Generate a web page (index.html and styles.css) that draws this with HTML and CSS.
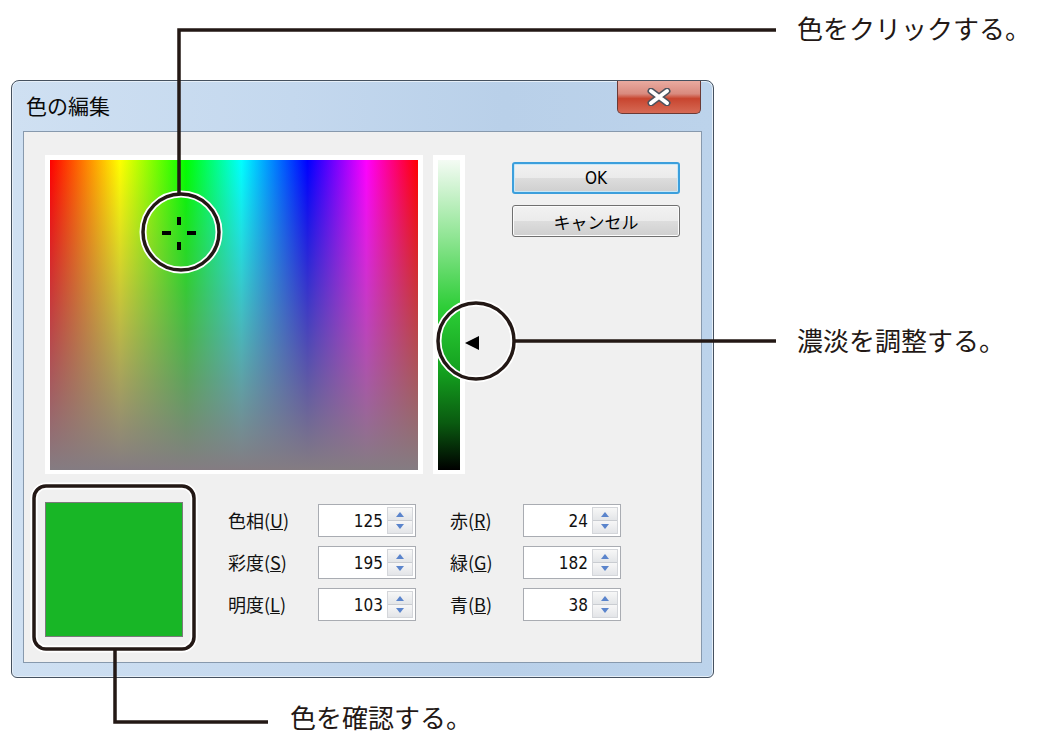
FILE: index.html
```html
<!DOCTYPE html>
<html lang="ja">
  <head>
    <meta charset="UTF-8">
    <title>色の編集</title>
    <link rel="stylesheet" href="styles.css">
  </head>
  <body>
    <div id="page">
      <div id="dialog">
        <div class="titlebar">
          <span class="title">色の編集</span>
          <div class="close-btn">
            <svg width="26" height="18" viewBox="0 0 26 18">
              <path d="M5 3 L21 15 M21 3 L5 15" stroke="#4d535e" stroke-width="7" stroke-linecap="round"/>
              <path d="M5 3 L21 15 M21 3 L5 15" stroke="#fff" stroke-width="4" stroke-linecap="round"/>
            </svg>
          </div>
        </div>

        <div class="client">
          <div class="top-row">
            <div class="spectrum-box">
              <div class="spectrum">
                <div class="cross" style="left: 129px; top: 73px;">
                  <span class="c-top"></span>
                  <span class="c-bottom"></span>
                  <span class="c-left"></span>
                  <span class="c-right"></span>
                </div>
              </div>
            </div>
            <div class="lum-box">
              <div class="lum"></div>
              <span class="lum-arrow" style="top: 181px;"></span>
            </div>
            <div class="buttons">
              <button class="btn btn-ok">OK</button>
              <button class="btn">キャンセル</button>
            </div>
          </div>

          <div class="bottom-row">
            <div class="swatch"></div>
            <div class="fields">
              <label class="lbl">色相(<u>U</u>)</label>
              <div class="spin-field"><span class="val">125</span><span class="spin"><i class="up"></i><i class="down"></i></span></div>
              <label class="lbl lbl-right">赤(<u>R</u>)</label>
              <div class="spin-field"><span class="val">24</span><span class="spin"><i class="up"></i><i class="down"></i></span></div>

              <label class="lbl">彩度(<u>S</u>)</label>
              <div class="spin-field"><span class="val">195</span><span class="spin"><i class="up"></i><i class="down"></i></span></div>
              <label class="lbl lbl-right">緑(<u>G</u>)</label>
              <div class="spin-field"><span class="val">182</span><span class="spin"><i class="up"></i><i class="down"></i></span></div>

              <label class="lbl">明度(<u>L</u>)</label>
              <div class="spin-field"><span class="val">103</span><span class="spin"><i class="up"></i><i class="down"></i></span></div>
              <label class="lbl lbl-right">青(<u>B</u>)</label>
              <div class="spin-field"><span class="val">38</span><span class="spin"><i class="up"></i><i class="down"></i></span></div>
            </div>
          </div>
        </div>
      </div>

      <!-- 説明の線と丸 -->
      <svg class="callouts" width="1037" height="733" viewBox="0 0 1037 733">
        <g fill="none" stroke="#fff" stroke-width="7">
          <circle cx="181" cy="232" r="38"/>
          <circle cx="476" cy="341" r="38"/>
          <rect x="34" y="486" width="160" height="163" rx="12"/>
        </g>
        <g fill="none" stroke="#231815" stroke-width="3.5">
          <polyline points="179,193 179,30 776,30"/>
          <circle cx="181" cy="232" r="38"/>
          <line x1="514" y1="341" x2="776" y2="341"/>
          <circle cx="476" cy="341" r="38"/>
          <polyline points="115,649 115,722 268,722"/>
          <rect x="34" y="486" width="160" height="163" rx="12"/>
        </g>
      </svg>
      <p class="note note-click">色をクリックする。</p>
      <p class="note note-lum">濃淡を調整する。</p>
      <p class="note note-check">色を確認する。</p>
    </div>
  </body>
</html>
```

FILE: styles.css
```css
body {
  margin: 0;
  background-color: #fff;
  font-family: "Noto Sans CJK JP", sans-serif;
  color: #000;
}

#page {
  position: relative;
  width: 1037px;
  height: 733px;
  padding: 80px 0 0 11px;
  box-sizing: border-box;
}

#dialog {
  width: 703px;
  height: 598px;
  box-sizing: border-box;
  border: 1px solid #45515f;
  border-radius: 8px 8px 6px 6px;
  padding: 0 11px 14px 11px;
  display: flex;
  flex-direction: column;
  background: linear-gradient(to right, #cfe0f2 0%, #c4d8ee 40%, #b9d0e9 70%, #bcd3eb 100%);
  box-shadow: inset 0 0 0 1px #e6eff8;
}

.titlebar {
  height: 50px;
  display: flex;
  justify-content: space-between;
  align-items: flex-start;
}

.title {
  margin: 11px 0 0 3px;
  font-size: 21px;
  line-height: 26px;
  color: #0a0a0a;
}

.close-btn {
  width: 84px;
  height: 33px;
  margin-right: 1px;
  box-sizing: border-box;
  border: 1px solid #6b3a35;
  border-top: none;
  border-radius: 0 0 5px 5px;
  background: linear-gradient(to bottom, #e9aaa0 0%, #d98a7e 40%, #c8452f 55%, #d66a55 100%);
  display: flex;
  align-items: center;
  justify-content: center;
}

.client {
  flex: 1;
  box-sizing: border-box;
  border: 1px solid #8799ad;
  background-color: #f0f0f0;
  padding: 23px 0 0 21px;
}

.top-row {
  display: flex;
}

.spectrum-box {
  width: 378px;
  height: 319px;
  box-sizing: border-box;
  padding: 5px 5px 4px 5px;
  background-color: #fff;
}

.spectrum {
  position: relative;
  width: 100%;
  height: 100%;
  background:
    linear-gradient(to bottom, rgba(128, 128, 128, 0) 0%, rgba(132, 124, 130, 1) 100%),
    linear-gradient(to right, #f00 0%, #ff0 19%, #0f0 37%, #0ff 52%, #00f 70%, #f0f 86%, #f00 100%);
}

.cross {
  position: absolute;
  width: 0;
  height: 0;
}

.cross span {
  position: absolute;
  background-color: #000;
}

.c-top { left: -2px; top: -16px; width: 4px; height: 8px; }
.c-bottom { left: -2px; top: 9px; width: 4px; height: 8px; }
.c-left { left: -17px; top: -2px; width: 9px; height: 4px; }
.c-right { left: 8px; top: -2px; width: 9px; height: 4px; }

.lum-box {
  position: relative;
  width: 32px;
  height: 319px;
  margin-left: 10px;
  box-sizing: border-box;
  padding: 5px 5px 4px 5px;
  background-color: #fff;
}

.lum {
  width: 100%;
  height: 100%;
  background: linear-gradient(to bottom, #f4fbf4 0%, #8fe593 25%, #2ccd36 48%, #14a11f 68%, #0a5a10 85%, #000 100%);
}

.lum-arrow {
  position: absolute;
  left: 32px;
  width: 0;
  height: 0;
  border-top: 7px solid transparent;
  border-bottom: 7px solid transparent;
  border-right: 14px solid #000;
}

.buttons {
  display: flex;
  flex-direction: column;
  gap: 11px;
  margin-left: 47px;
  padding-top: 7px;
}

.btn {
  width: 168px;
  height: 32px;
  border: 1px solid #707070;
  border-radius: 3px;
  background: linear-gradient(to bottom, #f2f2f2 0%, #ebebeb 49%, #dddddd 50%, #cfcfcf 100%);
  box-shadow: inset 0 0 0 1px #fcfcfc;
  font-family: "DejaVu Sans Condensed", "Noto Sans CJK JP", sans-serif;
  font-size: 17px;
  color: #000;
  padding: 0;
}

.btn-ok {
  border: 2px solid #3c9fdc;
  box-shadow: inset 0 0 0 1px #c8e8f8;
}

.bottom-row {
  display: flex;
  margin-top: 28px;
}

.swatch {
  width: 138px;
  height: 135px;
  box-sizing: border-box;
  border: 1px solid #7a7a7a;
  background-color: #18b626;
}

.fields {
  display: grid;
  grid-template-columns: 90px 98px 107px 98px;
  grid-auto-rows: 33px;
  row-gap: 9px;
  margin-left: 45px;
  margin-top: 2px;
}

.lbl {
  font-family: "Noto Sans CJK JP", sans-serif;
  font-size: 18px;
  line-height: 33px;
  color: #111;
}

.lbl-right {
  padding-left: 34px;
}

.spin-field {
  display: flex;
  box-sizing: border-box;
  border: 1px solid #a9acb2;
  background-color: #fff;
  padding: 2px 2px 2px 0;
}

.val {
  flex: 1;
  text-align: right;
  padding-right: 4px;
  font-family: "DejaVu Sans Condensed", sans-serif;
  font-size: 17px;
  line-height: 28px;
  color: #111;
}

.spin {
  width: 26px;
  display: flex;
  flex-direction: column;
  border: 1px solid #d4d6da;
  box-sizing: border-box;
}

.spin i {
  flex: 1;
  position: relative;
  background: linear-gradient(to bottom, #f7f7f7, #e3e5e8);
}

.spin i::after {
  content: "";
  position: absolute;
  left: 8px;
  top: 4px;
  border-left: 4px solid transparent;
  border-right: 4px solid transparent;
}

.spin .up::after {
  border-bottom: 5px solid #5a84cc;
}

.spin .down::after {
  border-top: 5px solid #5a84cc;
  top: 3px;
}

.spin .down {
  border-top: 1px solid #c9ccd1;
}

.callouts {
  position: absolute;
  left: 0;
  top: 0;
  pointer-events: none;
}

.note {
  position: absolute;
  margin: 0;
  font-size: 26px;
  line-height: 26px;
  color: #231815;
  white-space: nowrap;
}

.note-click { left: 797px; top: 15px; }
.note-lum { left: 797px; top: 327px; }
.note-check { left: 290px; top: 704px; }
```
